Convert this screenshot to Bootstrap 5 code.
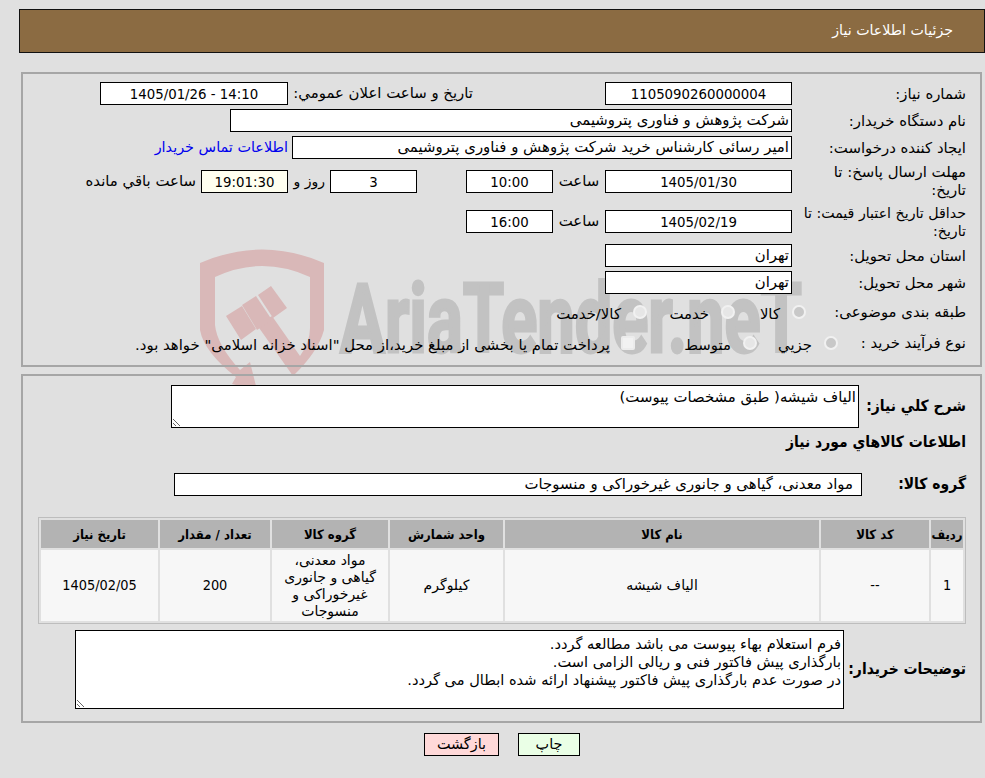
<!DOCTYPE html>
<html lang="fa" dir="rtl">
<head>
<meta charset="utf-8">
<title>جزئیات اطلاعات نیاز</title>
<link href="https://cdn.jsdelivr.net/npm/bootstrap@5.3.0/dist/css/bootstrap.min.css" rel="stylesheet">
<style>
html,body{height:100%}
body{background:#e0e0e0;margin:0;font-family:"DejaVu Sans",sans-serif;font-size:14.9px;color:#000;overflow:hidden;position:relative}
.num{font-family:"DejaVu Sans Condensed","DejaVu Sans",sans-serif;font-stretch:condensed;font-size:14.8px}
.wm{position:absolute;left:0;top:0;width:985px;height:778px;z-index:-1;pointer-events:none}
.wm text{font-family:"Roboto",sans-serif;font-weight:700}
.hdr{height:44px;margin:9px 0 0 19px;background:#8b6b42;border:1px solid #111;color:#fff;padding-right:31px;font-size:14.2px}
.pnl{margin-left:21px;margin-right:3px;border:2px solid #a6a6a6;padding-right:14px}
.p1{margin-top:19px;height:295px;padding-top:6px}
.p2{margin-top:7px;height:349px;padding-top:9px}
.rw{height:27px}
.rw-t1{height:40px}
.rw-t2{height:41px}
.rw-r1{height:33px}
.rw-r2{height:29px}
.lb{width:174px;flex:none;line-height:18px;white-space:nowrap}
.lb-s{font-size:14.2px}
.lb-r1{width:160px;flex:none}
.lb-r2{width:128px;flex:none}
.fld{height:23px;line-height:21px;background:#fff;border:1px solid #000;flex:none;white-space:nowrap;overflow:hidden;padding:0 2px}
.w187{width:187px}.w188{width:188px}.w87{width:87px}.w562{width:562px}.w500{width:500px}
.bg-ly{background:#fffff0}
.gap-a{width:317px;flex:none;padding-right:132px;white-space:nowrap}
.gap-s{width:52px;flex:none;text-align:center}
.gap-49{width:49px;flex:none}
.gap-r{width:42px;flex:none;padding-right:5px;white-space:nowrap;font-size:14px}
.ml-lnk{margin-right:4px;color:#0000ee;text-decoration:none;white-space:nowrap;font-size:14.4px}
.ml-rem{margin-right:5px;white-space:nowrap}
.rdo{appearance:none;-webkit-appearance:none;width:14px;height:14px;border-radius:50%;border:2px solid #f1f1f1;background:#e6e6e6;flex:none;margin:0 0 0 12px}
.rdo:checked{background:#c8c8c8}
.chk{appearance:none;-webkit-appearance:none;width:14px;height:14px;border-radius:2px;border:2px solid #ececec;background:#f2f2f2;flex:none;margin:0 0 0 11px}
.it71{width:71px;flex:none}.it88{width:88px;flex:none}.it81{width:81px;flex:none}.it122{width:122px;flex:none}
.nw{white-space:nowrap}
.nw-d{white-space:nowrap;padding-top:4px}
.ta{display:block;background:#fff;border:1px solid #000;border-radius:0;padding:2px;font:inherit;color:#000;flex:none;outline:0;margin:0;line-height:18px}
.ta1{width:688px;height:43px}
.ta2{width:769px;height:79px;padding-top:4px;font-size:14.6px}
.lb-b{font-family:"DejaVu Sans Condensed","DejaVu Sans",sans-serif;font-stretch:condensed;font-weight:700;font-size:15.5px;white-space:nowrap}
.w107{width:107px;flex:none}.w104{width:104px;flex:none}.w122{width:122px;flex:none}
.ttl{height:30px}
.grow-r{margin-top:15px}
.fg{width:688px;padding-right:8px}
.tbl-w{width:928px;margin:21px 0 0 0;border:1px solid #bdbdbd;border-collapse:separate;border-spacing:2px;table-layout:fixed;font-size:14px}
.tbl-w th{background:#b3b3b3;height:28px;text-align:center;font-family:"DejaVu Sans Condensed","DejaVu Sans",sans-serif;font-stretch:condensed;font-weight:700;font-size:13px;padding:0;white-space:nowrap}
.tbl-w td{background:#f7f7f7;height:71px;text-align:center;padding:0 6px;line-height:17px;vertical-align:middle}
.tbl-w td.num{font-size:14.4px}
.ds-r{margin-top:6px}
.acts{margin-top:10px;padding-left:19px;gap:19px}
.bt{height:23px;padding:0;border:1px solid #000;border-radius:0;color:#000;font:inherit;font-size:14.4px;line-height:21px}
.bt-g{width:62px;background:#eaffe6}
.bt-r{width:75px;background:#ffd9d9}
.bt-g:hover{background:#eaffe6;color:#000}.bt-r:hover{background:#ffd9d9;color:#000}
</style>
</head>
<body>
<svg class="wm" viewBox="0 0 985 778" aria-hidden="true">
  <g fill="#d9b8b8">
    <path d="M200 263Q262 236 324 263V330Q318 352 293 376L257 325L272 316L300 356Q310 342 310 328V277Q262 255 215 277V325Q217 345 240 370L250 362L257 390L232 384L236 377Q204 352 200 330Z"/>
    <path d="M226 316L242 306L256 329L241 340Z"/>
    <path d="M242 305L256 296L272 320L257 330Z"/>
    <path d="M258 295L271 286L287 308L273 318Z"/>
  </g>
  <text x="340" y="352" fill="#c2c2c2" stroke="#c2c2c2" stroke-width="3" font-size="96" textLength="462" lengthAdjust="spacingAndGlyphs" style="direction:ltr">AriaTender.neT</text>
</svg>

<div class="hdr d-flex align-items-center">جزئیات اطلاعات نیاز</div>

<div class="pnl p1">
  <div class="rw d-flex align-items-center">
    <div class="lb">شماره نیاز:</div>
    <div class="fld w187 text-center num">1105090260000004</div>
    <div class="gap-a">تاریخ و ساعت اعلان عمومي:</div>
    <div class="fld w188 text-center num"><bdi>1405/01/26 - 14:10</bdi></div>
  </div>
  <div class="rw d-flex align-items-center">
    <div class="lb">نام دستگاه خریدار:</div>
    <div class="fld w562">شرکت پژوهش و فناوری پتروشیمی</div>
  </div>
  <div class="rw d-flex align-items-center">
    <div class="lb">ایجاد کننده درخواست:</div>
    <div class="fld w500">امیر رسائی کارشناس خرید شرکت پژوهش و فناوری پتروشیمی</div>
    <a class="ml-lnk" href="#">اطلاعات تماس خریدار</a>
  </div>
  <div class="rw rw-t1 d-flex align-items-center">
    <div class="lb">مهلت ارسال پاسخ: تا<br>تاریخ:</div>
    <div class="fld w187 text-center num">1405/01/30</div>
    <div class="gap-s">ساعت</div>
    <div class="fld w87 text-center num">10:00</div>
    <div class="gap-49"></div>
    <div class="fld w87 text-center num">3</div>
    <div class="gap-r">روز و</div>
    <div class="fld w87 bg-ly text-center num">19:01:30</div>
    <div class="ml-rem">ساعت باقي مانده</div>
  </div>
  <div class="rw rw-t2 d-flex align-items-center">
    <div class="lb lb-s">حداقل تاریخ اعتبار قیمت: تا<br>تاریخ:</div>
    <div class="fld w187 text-center num">1405/02/19</div>
    <div class="gap-s">ساعت</div>
    <div class="fld w87 text-center num">16:00</div>
  </div>
  <div class="rw d-flex align-items-center">
    <div class="lb">استان محل تحویل:</div>
    <div class="fld w187">تهران</div>
  </div>
  <div class="rw d-flex align-items-center">
    <div class="lb">شهر محل تحویل:</div>
    <div class="fld w187">تهران</div>
  </div>
  <div class="rw rw-r1 d-flex align-items-center">
    <div class="lb-r1 nw">طبقه بندی موضوعی:</div>
    <div class="it71 d-flex align-items-center"><input class="rdo" type="radio" name="a" checked disabled><span class="nw-d">کالا</span></div>
    <div class="it88 d-flex align-items-center"><input class="rdo" type="radio" name="a" disabled><span class="nw-d">خدمت</span></div>
    <div class="d-flex align-items-center"><input class="rdo" type="radio" name="a" disabled><span class="nw-d">کالا/خدمت</span></div>
  </div>
  <div class="rw rw-r2 d-flex align-items-center">
    <div class="lb-r2 nw">نوع فرآیند خرید :</div>
    <div class="it81 d-flex align-items-center"><input class="rdo" type="radio" name="b" checked disabled><span class="nw-d">جزيي</span></div>
    <div class="it122 d-flex align-items-center"><input class="rdo" type="radio" name="b" disabled><span class="nw-d">متوسط</span></div>
    <div class="d-flex align-items-center"><input class="chk" type="checkbox" disabled><span class="nw-d">پرداخت تمام یا بخشی از مبلغ خرید،از محل "اسناد خزانه اسلامی" خواهد بود.</span></div>
  </div>
</div>

<div class="pnl p2">
  <div class="d-flex align-items-center">
    <div class="w107 lb-b">شرح کلي نياز:</div>
    <textarea class="ta ta1" readonly>الیاف شیشه( طبق مشخصات پیوست)</textarea>
  </div>
  <div class="ttl d-flex align-items-center lb-b">اطلاعات کالاهاي مورد نياز</div>
  <div class="d-flex align-items-center grow-r">
    <div class="w104 lb-b">گروه کالا:</div>
    <div class="fld fg">مواد معدنی، گیاهی و جانوری غیرخوراکی و منسوجات</div>
  </div>
  <table class="tbl-w">
    <colgroup><col style="width:32px"><col style="width:108px"><col style="width:314px"><col style="width:113px"><col style="width:116px"><col style="width:110px"><col style="width:117px"></colgroup>
    <thead><tr><th>ردیف</th><th>کد کالا</th><th>نام کالا</th><th>واحد شمارش</th><th>گروه کالا</th><th>تعداد / مقدار</th><th>تاریخ نیاز</th></tr></thead>
    <tbody><tr><td class="num">1</td><td class="num">--</td><td>الیاف شیشه</td><td>کیلوگرم</td><td>مواد معدنی، گیاهی و جانوری غیرخوراکی و منسوجات</td><td class="num">200</td><td class="num">1405/02/05</td></tr></tbody>
  </table>
  <div class="d-flex align-items-center ds-r">
    <div class="w122 lb-b">توضیحات خریدار:</div>
    <textarea class="ta ta2" readonly>فرم استعلام بهاء پیوست می باشد مطالعه گردد.
بارگذاری پیش فاکتور فنی و ریالی الزامی است.
در صورت عدم بارگذاری پیش فاکتور پیشنهاد ارائه شده ابطال می گردد.</textarea>
  </div>
</div>

<div class="acts d-flex justify-content-center">
  <button type="button" class="btn bt bt-g">چاپ</button>
  <button type="button" class="btn bt bt-r">بازگشت</button>
</div>
<script src="https://cdn.jsdelivr.net/npm/bootstrap@5.3.0/dist/js/bootstrap.bundle.min.js"></script>
</body>
</html>
